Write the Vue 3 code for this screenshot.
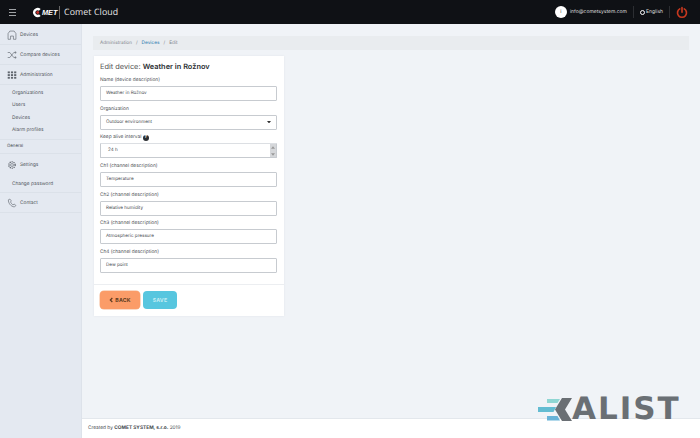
<script setup>
const navTop = [
  { label: 'Devices', icon: 'home' },
  { label: 'Compare devices', icon: 'compare' },
  { label: 'Administration', icon: 'grid' },
]
const adminLinks = ['Organizations', 'Users', 'Devices', 'Alarm profiles']
const channels = [
  { label: 'Ch1 (channel description)', value: 'Temperature' },
  { label: 'Ch2 (channel description)', value: 'Relative humidity' },
  { label: 'Ch3 (channel description)', value: 'Atmospheric pressure' },
  { label: 'Ch4 (channel description)', value: 'Dew point' },
]
</script>

<template>
  <div class="page">
    <header class="topbar">
      <div class="burger"><i></i><i></i><i></i></div>
      <div class="brand">
        <svg class="brand-c" viewBox="0 0 12 12" width="11" height="11">
          <path d="M9.5 2.2A5 5 0 1 0 9.5 9.8L7.6 7.9A2.4 2.4 0 1 1 7.6 4.1Z" fill="#fff" />
          <circle cx="6.2" cy="6" r="1.6" fill="#c9302c" />
        </svg>
        <span class="brand-met">MET</span>
      </div>
      <span class="brand-rule"></span>
      <span class="cloud">Comet Cloud</span>
      <div class="top-right">
        <span class="avatar">i</span>
        <span class="mail">info@cometsystem.com</span>
        <span class="top-rule"></span>
        <svg class="globe" viewBox="0 0 10 10" width="5" height="5">
          <circle cx="5" cy="5" r="4" fill="none" stroke="#fff" stroke-width="2" />
        </svg>
        <span class="lang">English</span>
        <span class="top-rule"></span>
        <svg class="power" viewBox="0 0 16 16" width="12" height="13">
          <path d="M5 3.2A6 6 0 1 0 11 3.2" fill="none" stroke="#c8381f" stroke-width="2.2" stroke-linecap="round" />
          <path d="M8 1.5V7.5" stroke="#c8381f" stroke-width="2.2" stroke-linecap="round" />
        </svg>
      </div>
    </header>

    <div class="body">
      <aside class="sidebar">
        <div v-for="item in navTop" :key="item.label" class="nav-row">
          <svg v-if="item.icon === 'home'" class="nav-icon" viewBox="0 0 14 14">
            <path d="M1.5 5V13H5V8.5H9V13H12.5V5L10 1.5H4Z" fill="none" stroke="#60666e" stroke-width="0.9" />
          </svg>
          <svg v-else-if="item.icon === 'compare'" class="nav-icon" viewBox="0 0 14 14">
            <path d="M1 3.5H4L9.5 10.5H12.5M1 10.5H4L9.5 3.5H12.5M11 2L13 3.5L11 5M11 9L13 10.5L11 12" fill="none" stroke="#60666e" stroke-width="0.9" />
          </svg>
          <svg v-else class="nav-icon" viewBox="0 0 14 14" fill="#60666e">
            <rect x="1" y="2" width="3" height="2.6" /><rect x="5.5" y="2" width="3" height="2.6" /><rect x="10" y="2" width="3" height="2.6" />
            <rect x="1" y="5.8" width="3" height="2.6" /><rect x="5.5" y="5.8" width="3" height="2.6" /><rect x="10" y="5.8" width="3" height="2.6" />
            <rect x="1" y="9.6" width="3" height="2.6" /><rect x="5.5" y="9.6" width="3" height="2.6" /><rect x="10" y="9.6" width="3" height="2.6" />
          </svg>
          <span>{{ item.label }}</span>
        </div>
        <div class="sub-list">
          <a v-for="link in adminLinks" :key="link" class="sub-link">{{ link }}</a>
        </div>
        <div class="section-title">General</div>
        <div class="nav-row settings-row">
          <svg class="nav-icon" viewBox="0 0 14 14">
            <circle cx="7" cy="7" r="2" fill="none" stroke="#60666e" stroke-width="0.9" />
            <circle cx="7" cy="7" r="4.4" fill="none" stroke="#60666e" stroke-width="1.9" stroke-dasharray="1.6 1.2" />
          </svg>
          <span>Settings</span>
        </div>
        <div class="sub-list single">
          <a class="sub-link">Change password</a>
        </div>
        <div class="nav-row contact-row">
          <svg class="nav-icon" viewBox="0 0 14 14">
            <path d="M2 2.5C1.5 6.5 5 12 10.5 12.5L12.5 10.5L10 8.5L8.5 9.5C7 9 5.5 7 5 5.5L6 4L4 1.5Z" fill="none" stroke="#60666e" stroke-width="0.9" />
          </svg>
          <span>Contact</span>
        </div>
      </aside>

      <div class="main">
        <div class="content">
          <nav class="crumbs">
            <span>Administration</span><em>/</em><b>Devices</b><em>/</em><span>Edit</span>
          </nav>
          <section class="card">
            <div class="card-body">
              <h1>Edit device: <strong>Weather in Rožnov</strong></h1>
              <label>Name (device description)</label>
              <div class="field">Weather in Rožnov</div>
              <label>Organization</label>
              <div class="field select">
                Outdoor environment
                <svg viewBox="0 0 8 5" width="4" height="2.5"><path d="M0 0H8L4 5Z" fill="#333" /></svg>
              </div>
              <label>Keep alive interval <span class="help">?</span></label>
              <div class="field spin">
                <span class="spin-value">24 h</span>
                <span class="spinner">
                  <svg viewBox="0 0 6 4" width="4" height="3"><path d="M0 4L3 0L6 4Z" fill="#999" /></svg>
                  <svg viewBox="0 0 6 4" width="4" height="3"><path d="M0 0L3 4L6 0Z" fill="#999" /></svg>
                </span>
              </div>
              <template v-for="ch in channels" :key="ch.label">
                <label>{{ ch.label }}</label>
                <div class="field">{{ ch.value }}</div>
              </template>
            </div>
            <div class="card-actions">
              <button class="btn back"><svg viewBox="0 0 6 8" width="4" height="6"><path d="M5 1L2 4L5 7" fill="none" stroke="#5a3a20" stroke-width="1.8" /></svg>BACK</button>
              <button class="btn save">SAVE</button>
            </div>
          </section>
        </div>
        <footer class="footer">Created by <strong>COMET SYSTEM, s.r.o.</strong> 2019</footer>
      </div>
    </div>

    <div class="kalist">
      <svg viewBox="0 0 35 23" width="35" height="23">
        <path d="M9 1H22L19.5 5H9Z" fill="#8fd6d3" />
        <path d="M0 9H18L15.5 14H0Z" fill="#63bcd2" />
        <path d="M9 18H19.5L22 22.5H9Z" fill="#68b3d8" />
        <path d="M24 0H34L27 11.5L34 23H24L17 11.5Z" fill="#6a6f74" />
      </svg>
      <span>ALIST</span>
    </div>
  </div>
</template>

<style scoped>
.page {
  position: relative;
  width: 700px;
  height: 438px;
  overflow: hidden;
  display: flex;
  flex-direction: column;
  font-family: Inter, Roboto, sans-serif;
  color: #3a3f45;
  background: #f0f3f7;
  text-rendering: geometricPrecision;
}
.topbar {
  height: 24px;
  flex: none;
  display: flex;
  align-items: center;
  background: #0f1115;
  color: #fff;
  padding-left: 9px;
}
.burger { width: 7px; display: flex; flex-direction: column; gap: 2px; margin-right: 16px; }
.burger i { display: block; height: 1px; background: #a0a3a6; }
.brand { display: flex; align-items: center; width: 25px; }
.brand-c { flex: none; }
.brand-met {
  font: italic 700 7.4px "Liberation Sans", sans-serif;
  margin-left: -1px;
  letter-spacing: -0.1px;
}
.brand-rule { width: 1px; height: 13px; background: #666; margin: 0 4px 0 2px; }
.cloud { font: 400 8.8px "Open Sans", sans-serif; letter-spacing: 0.1px; color: #e8e8e8; }
.top-right { margin-left: auto; display: flex; align-items: center; padding-right: 12px; }
.avatar {
  width: 12px; height: 12px; border-radius: 50%;
  background: #fff; color: #333;
  font-size: 5px; line-height: 12px; text-align: center;
}
.mail { font-size: 5px; margin-left: 3px; color: #ddd; }
.top-rule { width: 1px; height: 12px; background: #2c2e32; margin: 0 6px; }
.globe { margin-right: 1px; }
.lang { font-size: 5px; color: #ddd; }
.power { display: block; }

.body { flex: 1; display: flex; min-height: 0; }
.sidebar {
  width: 82px;
  flex: none;
  background: #e4e9f1;
  border-right: 1px solid #dde2ea;
  box-sizing: border-box;
  padding-top: 1px;
  font-size: 4.8px;
  color: #50555b;
}
.nav-row {
  height: 20px;
  display: flex;
  align-items: center;
  padding-left: 7px;
  gap: 3px;
  border-bottom: 1px solid #dbe1e9;
  box-sizing: border-box;
}
.nav-icon { width: 10px; height: 10px; flex: none; }
.sub-list { display: flex; flex-direction: column; padding: 2px 0 3px 12px; border-bottom: 1px solid #dbe1e9; }
.sub-link { height: 12.3px; line-height: 12.3px; }
.section-title { height: 14px; line-height: 14px; font-size: 4.4px; padding-left: 7px; border-bottom: 1px solid #dbe1e9; box-sizing: border-box; }
.settings-row { height: 22px; border-bottom: none; }
.sub-list.single { padding: 2px 0 2px 12px; }
.contact-row { height: 20px; }

.main { flex: 1; display: flex; flex-direction: column; min-width: 0; }
.content { flex: 1; padding: 12px 11px 0 11px; }
.crumbs {
  height: 14px;
  background: #e9ecef;
  display: flex;
  align-items: center;
  gap: 3px;
  padding-left: 7px;
  font-size: 4.7px;
  color: #81868d;
  margin-bottom: 6px;
}
.crumbs em { font-style: normal; margin: 0 1px; }
.crumbs b { font-weight: 500; color: #3f87b5; }
.card {
  width: 190px;
  margin-left: 1px;
  height: 260px;
  background: #fff;
  display: flex;
  flex-direction: column;
  box-shadow: 0 0 2px rgba(60, 70, 90, 0.08);
}
.card-body { flex: 1; padding: 5px 7px 0 6px; }
h1 {
  margin: 0 0 4px;
  font-size: 7.4px;
  line-height: 11px;
  font-weight: 400;
  color: #555;
}
h1 strong { font-weight: 600; color: #2b2f33; }
label {
  display: block;
  height: 9px;
  line-height: 9px;
  font-size: 4.8px;
  color: #484c51;
  margin-bottom: 1px;
}
.help {
  display: inline-block;
  width: 6px; height: 6px;
  border-radius: 50%;
  background: #2b2f33;
  color: #fff;
  font-size: 4.5px;
  line-height: 6px;
  text-align: center;
  font-weight: 700;
}
.field {
  height: 15px;
  box-sizing: border-box;
  border: 1px solid #c7cbd0;
  border-radius: 1px;
  padding-left: 5px;
  font-size: 4.6px;
  line-height: 13px;
  color: #484c51;
  margin-bottom: 3.7px;
  background: #fff;
}
.select { display: flex; align-items: center; justify-content: space-between; padding-right: 5px; }
.spin { display: flex; justify-content: space-between; border-top-color: #dcdfe3; padding-left: 7px; }
.spinner {
  width: 6px;
  background: #d5d7da;
  display: flex;
  flex-direction: column;
  align-items: center;
  justify-content: space-around;
}
.spinner svg { display: block; width: 4px; height: 3px; }
.card-actions {
  height: 32px;
  flex: none;
  box-sizing: border-box;
  border-top: 1px solid #eceef1;
  display: flex;
  align-items: flex-start;
  gap: 3px;
  padding: 6px 0 0 6px;
}
.btn {
  height: 18px;
  border: none;
  border-radius: 4px;
  font: 700 5.2px Inter, Roboto, sans-serif;
  letter-spacing: 0.2px;
  padding: 0;
  display: flex;
  align-items: center;
  justify-content: center;
  gap: 2px;
}
.back { width: 40px; background: #fb9c68; color: #5a3a20; box-shadow: 0 0 0 0.5px #f5b68f; }
.save { width: 34px; background: #57c6df; color: #c3ecf3; }
.footer {
  height: 20px;
  flex: none;
  box-sizing: border-box;
  background: #fff;
  border-top: 1px solid #e3e7ec;
  padding-left: 6px;
  font-size: 4.8px;
  line-height: 19px;
  color: #45494e;
}
.footer strong { font-weight: 700; }
.kalist {
  position: absolute;
  left: 538px;
  top: 398px;
  display: flex;
  align-items: center;
  height: 23px;
}
.kalist svg { flex: none; }
.kalist span {
  font: 700 31px/23px "DejaVu Sans", sans-serif;
  color: #6a6f74;
  letter-spacing: 2px;
  margin-left: -1px;
}
</style>
